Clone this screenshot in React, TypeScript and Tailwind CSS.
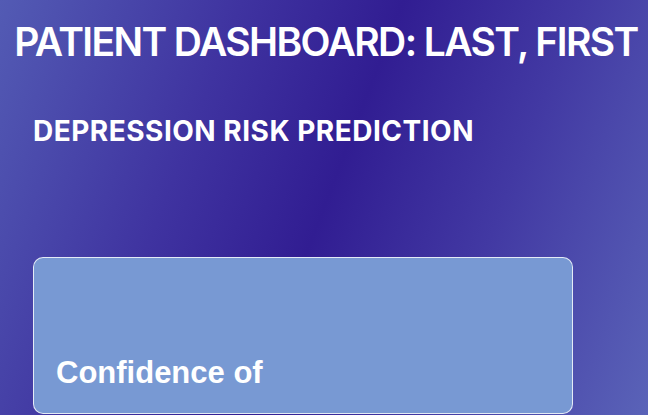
export default function App() {
  return (
    <div
      className="h-[415px] w-full overflow-hidden bg-[linear-gradient(111deg,#535bb4_0%,#3f33a0_30%,#311d92_50%,#4239a3_72%,#5a63b8_100%)] text-white"
      style={{ fontFamily: "Inter, 'Noto Sans', sans-serif" }}
    >
      <h1 className="whitespace-nowrap pl-1 pt-[18px] text-center text-[39px] font-semibold leading-[48px] tracking-[-1.6px]">
        PATIENT DASHBOARD: LAST, FIRST
      </h1>

      <h2 className="mt-[48px] pl-[33px] text-[28px] font-bold leading-[34px] tracking-[0.5px]">
        DEPRESSION RISK PREDICTION
      </h2>

      <div className="ml-[33px] mt-[109px] flex h-[157px] w-[540px] flex-col justify-end rounded-[10px] border border-white/80 bg-[#7899d3] px-[22px] pb-[22px]">
        <p
          className="text-[31px] font-bold leading-[36px]"
          style={{ fontFamily: "'Liberation Sans', Arial, sans-serif" }}
        >
          Confidence of
        </p>
      </div>
    </div>
  );
}
